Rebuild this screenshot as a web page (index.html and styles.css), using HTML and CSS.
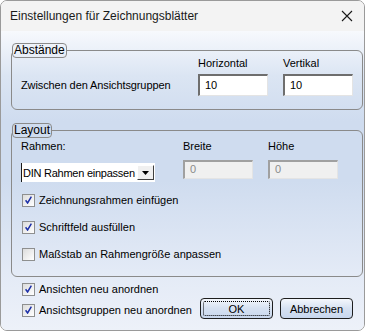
FILE: index.html
```html
<!DOCTYPE html>
<html lang="de">
<head>
    <meta charset="UTF-8">
    <title>Einstellungen für Zeichnungsblätter</title>
    <link rel="stylesheet" href="styles.css">
</head>
<body>
    <div class="window">
        <div class="titlebar">
            <span class="title">Einstellungen für Zeichnungsblätter</span>
            <svg class="close" width="12" height="12" viewBox="0 0 12 12">
                <path d="M1 1 L11 11 M11 1 L1 11" stroke="#1a1a1a" stroke-width="1.1" fill="none"/>
            </svg>
        </div>

        <div class="content">
            <fieldset class="group group-spacing">
                <legend>Abstände</legend>
                <div class="spacing-grid">
                    <span></span>
                    <span class="col-head">Horizontal</span>
                    <span class="col-head">Vertikal</span>
                    <span class="row-label">Zwischen den Ansichtsgruppen</span>
                    <div class="field">10</div>
                    <div class="field">10</div>
                </div>
            </fieldset>

            <fieldset class="group group-layout">
                <legend>Layout</legend>
                <div class="layout-grid">
                    <span class="col-head">Rahmen:</span>
                    <span class="col-head">Breite</span>
                    <span class="col-head">Höhe</span>
                    <div class="combo">
                        <span class="combo-text">DIN Rahmen einpassen</span>
                        <span class="combo-btn">
                            <svg width="7" height="4" viewBox="0 0 7 4"><path d="M0 0 H7 L3.5 4 Z" fill="#000"/></svg>
                        </span>
                    </div>
                    <div class="field disabled">0</div>
                    <div class="field disabled">0</div>
                </div>
                <div class="checks">
                    <label class="check"><span class="box checked"></span>Zeichnungsrahmen einfügen</label>
                    <label class="check"><span class="box checked"></span>Schriftfeld ausfüllen</label>
                    <label class="check"><span class="box"></span>Maßstab an Rahmengröße anpassen</label>
                </div>
            </fieldset>

            <div class="footer">
                <div class="footer-checks">
                    <label class="check"><span class="box checked"></span>Ansichten neu anordnen</label>
                    <label class="check"><span class="box checked"></span>Ansichtsgruppen neu anordnen</label>
                </div>
                <div class="buttons">
                    <button class="btn default"><span class="focus">OK</span></button>
                    <button class="btn">Abbrechen</button>
                </div>
            </div>
        </div>
    </div>
</body>
</html>
```

FILE: styles.css
```css
body {
    margin: 0;
    background: #ffffff;
    font-family: "Liberation Sans", Arial, sans-serif;
    font-size: 11px;
    color: #000;
}
.window {
    width: 363px;
    height: 329px;
    border: 1px solid #9a9a9a;
    border-radius: 7px;
    overflow: hidden;
    display: flex;
    flex-direction: column;
}
.titlebar {
    height: 30px;
    flex: none;
    background: #f3f3f3;
    display: flex;
    align-items: center;
    justify-content: space-between;
    padding: 0 11px 0 9px;
}
.title {
    font-size: 12px;
    color: #1a1a1a;
}
.content {
    flex: 1;
    background: linear-gradient(#f7f9fd 0, #dbe5f3 45px, #cfdcef 90px, #cfdcef 150px, #e3eaf6 240px, #edf1f9 100%);
    padding: 12px 0 0 10px;
}
.group {
    width: 341px;
    margin: 0;
    padding: 0 0 0 9px;
    border: 1px solid #8a8a8a;
    border-radius: 6px;
}
.group legend {
    margin-left: -9px;
    padding: 0 1px;
    height: 13px;
    line-height: 13px;
    border: 1px solid #8a8a8a;
    border-radius: 4px;
    font-size: 12px;
}
.group-spacing {
    height: 65px;
}
.spacing-grid {
    display: grid;
    grid-template-columns: 162px 70px 70px;
    column-gap: 15px;
    row-gap: 4px;
    align-items: center;
    margin-top: -2px;
}
.col-head {
    line-height: 14px;
}
.row-label {
    white-space: nowrap;
    letter-spacing: -0.1px;
}
.field {
    height: 19px;
    border-style: solid;
    border-width: 2px 1px 1px 2px;
    border-color: #6e6e6e #e4e4e4 #e4e4e4 #6e6e6e;
    background: #fff;
    padding: 0 5px;
    line-height: 19px;
}
.field.disabled {
    height: 16px;
    line-height: 14px;
    background: #f0f0f0;
    color: #8a8a8a;
    border-color: #a0a0a0 #e4e4e4 #e4e4e4 #a0a0a0;
}
.group-layout {
    margin-top: 13px;
    height: 152px;
}
.layout-grid {
    display: grid;
    grid-template-columns: 147px 70px 70px;
    column-gap: 15px;
    row-gap: 7px;
    align-items: start;
    margin-top: 1px;
}
.combo {
    width: 134px;
    height: 19px;
    margin-top: 3px;
    background: #fff;
    display: flex;
    align-items: center;
    justify-content: space-between;
    border-left: 1px solid #1a1a1a;
    box-sizing: border-box;
}
.combo-text {
    white-space: nowrap;
    padding-left: 1px;
    letter-spacing: -0.25px;
}
.combo-btn {
    width: 17px;
    height: 15px;
    margin-right: 1px;
    background: #f0f0f0;
    border-style: solid;
    border-width: 1px;
    border-color: #fff #404040 #404040 #fff;
    box-sizing: border-box;
    display: flex;
    align-items: center;
    justify-content: center;
    flex: none;
}
.checks {
    margin-top: 11px;
    display: flex;
    flex-direction: column;
    gap: 13px;
}
.check {
    display: flex;
    align-items: center;
    gap: 4px;
    height: 14px;
    padding-left: 1px;
    white-space: nowrap;
}
.box {
    width: 11px;
    height: 11px;
    border: 1px solid #8e8f8f;
    background: linear-gradient(135deg, #dcdcdc, #ffffff);
    flex: none;
    position: relative;
}
.box.checked::after {
    content: "";
    position: absolute;
    left: 2px;
    top: 1px;
    width: 7px;
    height: 8px;
    background: url("data:image/svg+xml,%3Csvg xmlns='http://www.w3.org/2000/svg' width='7' height='8' viewBox='0 0 7 8'%3E%3Cpath d='M0.6 4.2 L2.6 7 L6.4 0.6' stroke='%231c2fa8' stroke-width='1.5' fill='none'/%3E%3C/svg%3E") no-repeat;
}
.footer {
    display: flex;
    justify-content: space-between;
    align-items: flex-end;
    width: 342px;
    margin-top: 5px;
}
.footer-checks {
    display: flex;
    flex-direction: column;
    gap: 7px;
    padding-left: 10px;
}
.buttons {
    display: flex;
    gap: 7px;
    margin-bottom: -2px;
}
.btn {
    width: 73px;
    height: 21px;
    border: 1px solid #1e1e1e;
    border-radius: 4px;
    background: linear-gradient(#f4f7fc, #d6e1f1 50%, #c8d7ee);
    font-family: "Liberation Sans", Arial, sans-serif;
    font-size: 11px;
    color: #000;
    padding: 0;
}
.btn.default {
    padding: 2px;
}
.focus {
    display: flex;
    align-items: center;
    justify-content: center;
    height: 100%;
    border: 1px dotted #000;
    border-radius: 2px;
    box-sizing: border-box;
}
```
